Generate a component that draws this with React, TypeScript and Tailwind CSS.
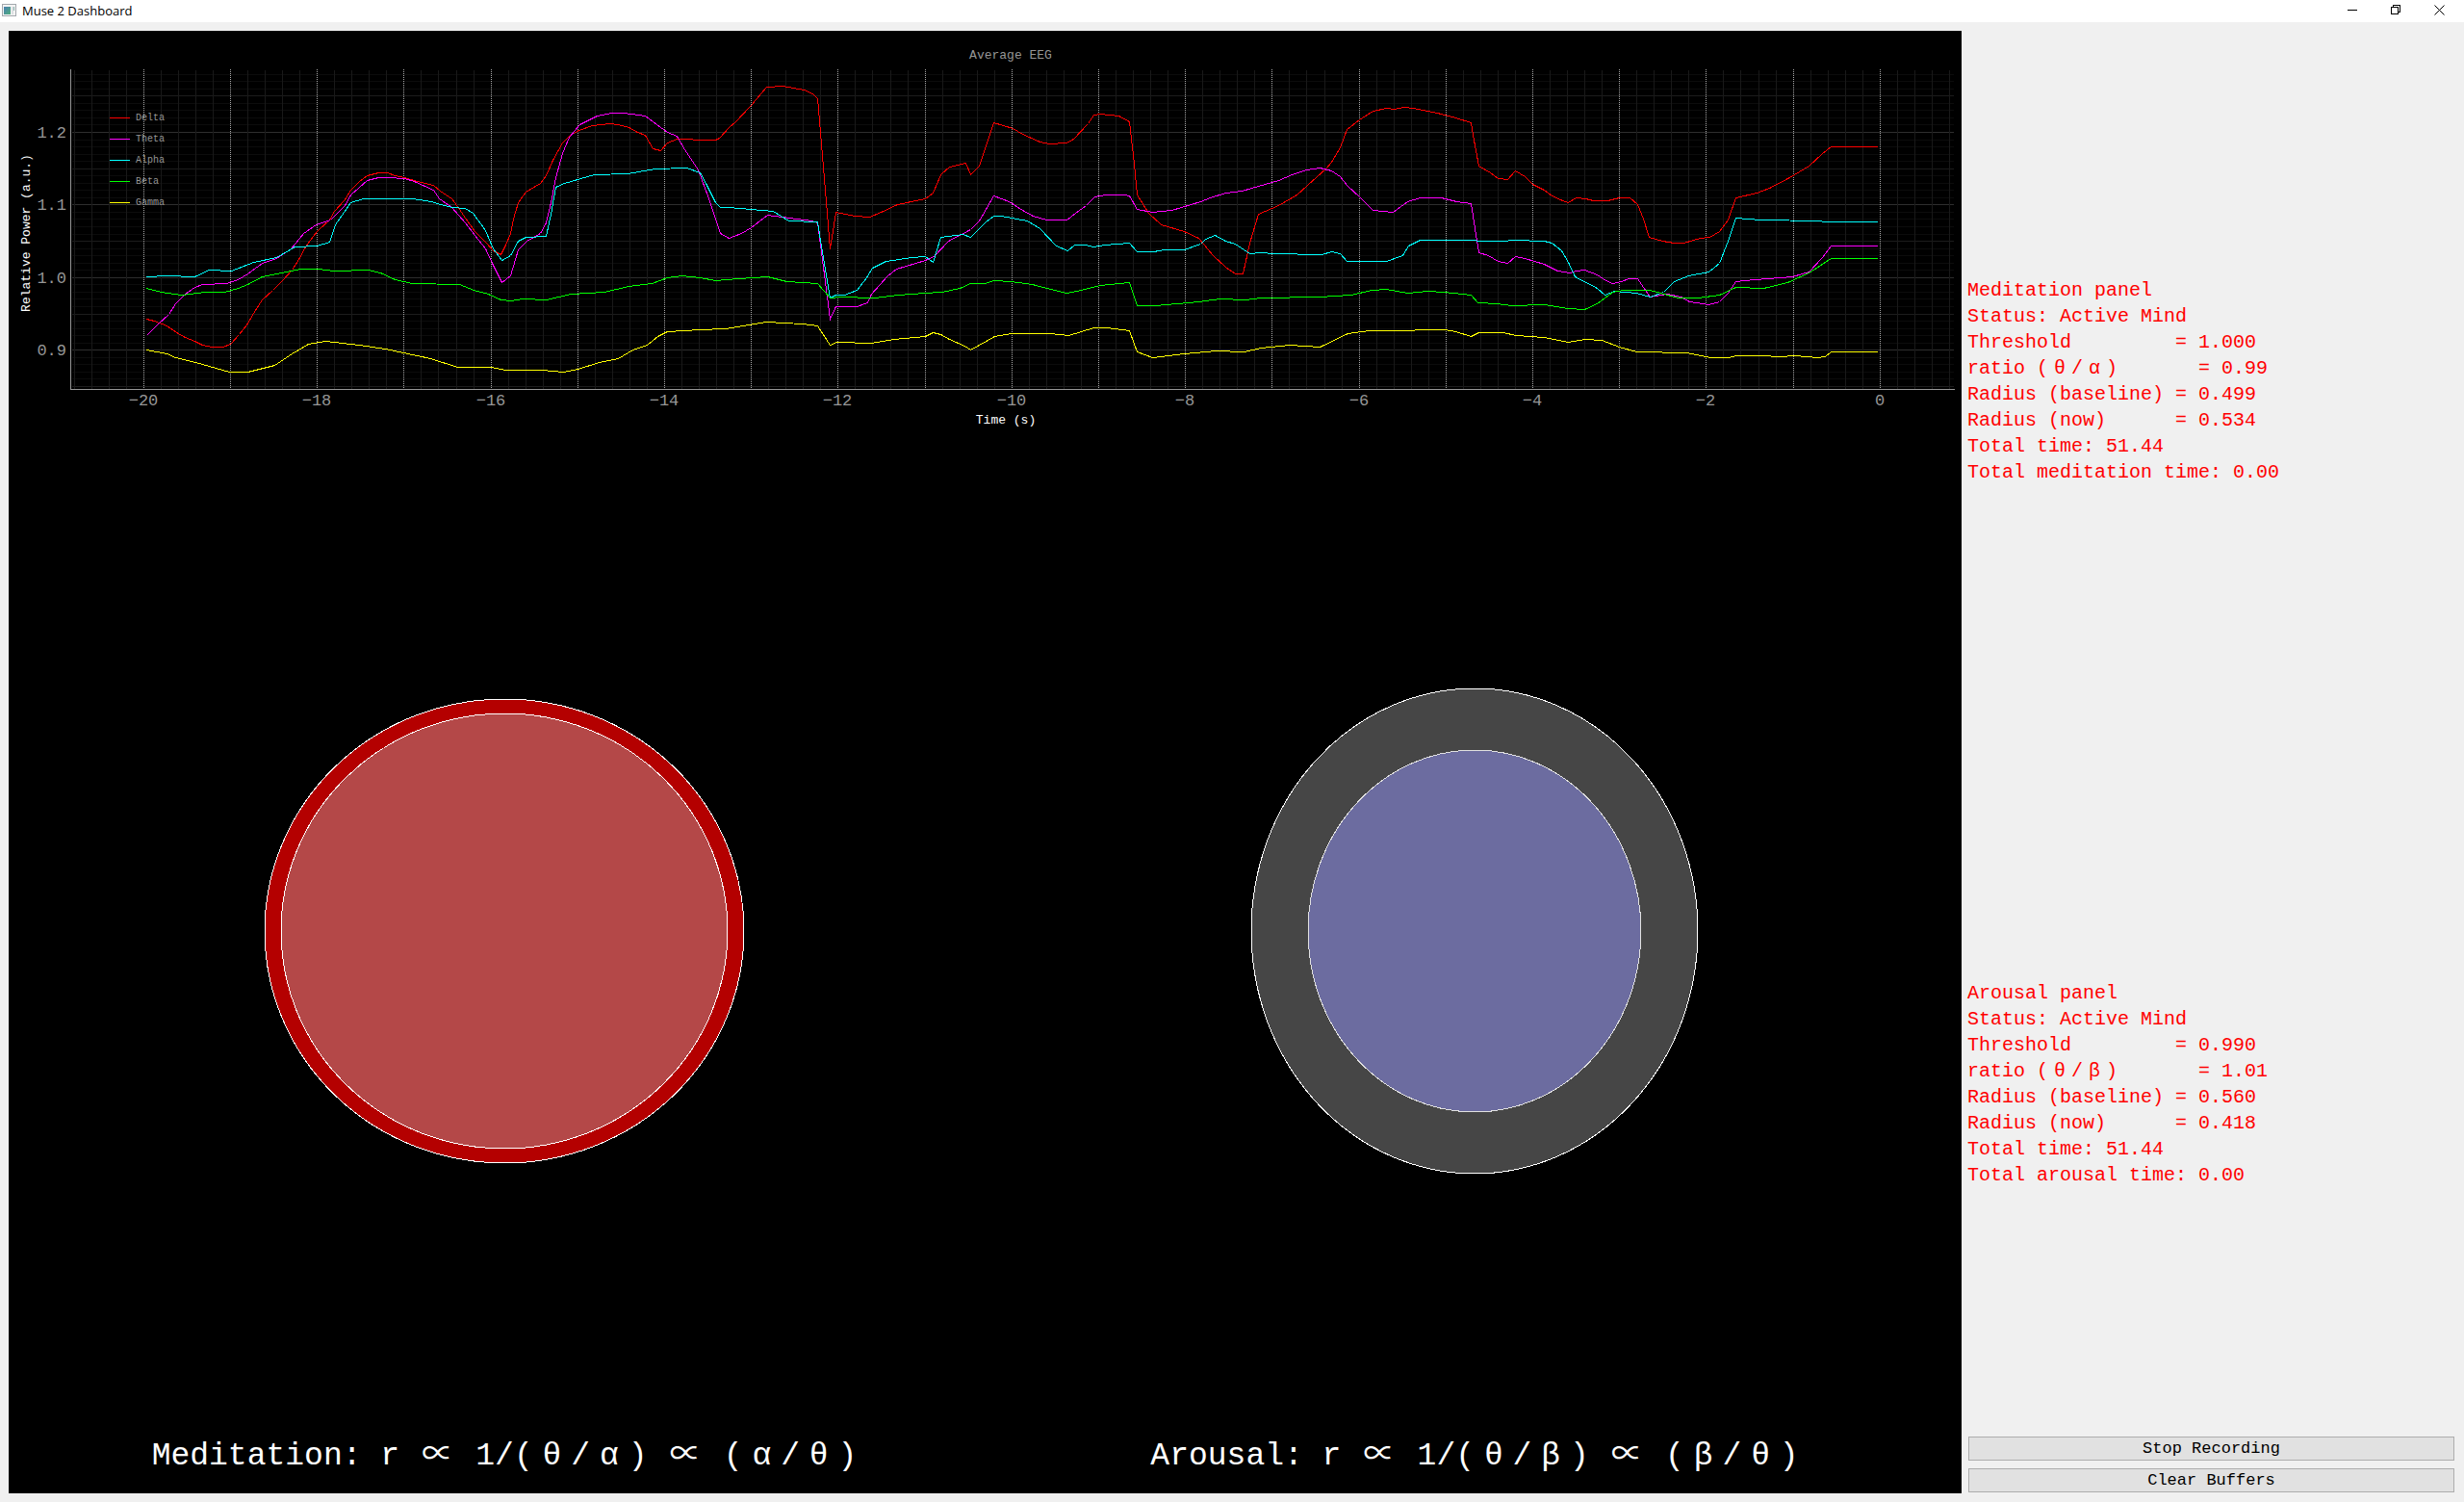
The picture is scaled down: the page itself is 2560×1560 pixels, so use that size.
import React from "react";

type Series = { name: string; color: string; points: string };

const MONO = "font-['Liberation_Mono',monospace]";

const SERIES: Series[] = [
  {
    name: "Delta",
    color: "#ff0000",
    points:
      "152,331 160,333 173,338 183,345 192,350 202,354 210,358 220,360 231,360 239,357 248,347 256,337 263,325 272,311 283,301 293,291 303,280 310,269 317,256 325,245 330,239 342,228 347,219 358,207 364,197 373,188 381,182 393,179 402,179 410,182 420,184 433,188 450,192 457,198 469,206 477,217 483,226 493,240 505,252 512,260 520,264 525,254 530,242 533,227 538,210 546,199 561,190 567,182 574,166 584,148 592,140 601,135 615,130 633,128 642,129 653,132 662,137 670,140 678,154 686,156 693,148 703,144 711,144 728,145 743,145 747,143 757,132 763,127 780,109 796,90 813,89 835,93 844,97 849,102 850,113 862,258 865,240 868,220 878,222 888,224 903,225 915,220 932,212 961,206 969,200 977,181 986,173 1003,169 1008,181 1017,172 1024,151 1032,127 1052,133 1062,139 1080,147 1090,149 1108,148 1115,144 1130,128 1136,119 1143,118 1162,120 1173,126 1178,170 1181,202 1193,221 1206,233 1230,240 1245,247 1260,265 1273,277 1283,284 1291,284 1298,252 1307,222 1328,213 1347,202 1358,192 1377,175 1383,168 1392,153 1399,134 1412,124 1426,115 1440,112 1448,113 1458,111 1468,112 1493,117 1512,122 1528,127 1530,140 1536,172 1548,179 1556,185 1566,186 1574,177 1584,183 1592,191 1604,197 1612,203 1623,208 1629,210 1637,205 1647,206 1655,208 1670,208 1682,205 1693,205 1701,212 1707,227 1713,246 1727,250 1739,252 1749,252 1766,247 1776,246 1786,240 1795,228 1803,205 1825,200 1838,195 1859,184 1879,172 1893,159 1902,152 1950,152",
  },
  {
    name: "Theta",
    color: "#ff00ff",
    points:
      "152,348 163,337 175,326 182,315 192,305 202,298 210,295 235,294 247,290 257,284 272,273 287,268 302,258 315,242 328,233 343,228 358,213 364,202 381,187 393,184 403,184 420,185 430,188 450,197 456,206 469,215 483,231 493,244 504,258 512,275 521,293 530,286 538,259 547,250 561,242 567,231 572,210 577,184 584,159 591,142 602,129 620,120 635,117 648,117 670,120 682,129 693,137 703,141 711,155 725,176 735,203 748,242 757,247 770,242 780,236 797,223 820,226 843,229 849,231 855,277 862,331 868,318 890,318 901,314 905,305 922,286 931,279 961,270 970,266 985,250 1008,238 1017,229 1024,217 1032,203 1048,209 1062,218 1073,224 1087,228 1108,228 1117,221 1128,213 1137,204 1148,202 1167,202 1173,203 1181,217 1197,220 1217,218 1247,209 1257,205 1273,200 1290,198 1307,193 1328,187 1342,181 1357,176 1371,174 1383,177 1392,183 1399,192 1413,205 1426,218 1447,220 1462,209 1475,205 1497,205 1513,209 1528,211 1532,237 1536,262 1546,265 1556,271 1566,273 1574,266 1584,268 1604,274 1618,281 1631,283 1637,281 1646,280 1659,285 1668,291 1675,294 1684,292 1692,289 1701,289 1707,298 1714,308 1732,305 1746,308 1755,313 1775,316 1786,313 1795,304 1803,292 1823,290 1862,287 1879,282 1893,267 1902,255 1950,255",
  },
  {
    name: "Alpha",
    color: "#00ffff",
    points:
      "152,287 173,286 202,287 217,280 240,281 263,272 287,267 306,256 329,255 342,251 348,233 364,210 377,206 428,206 448,209 457,212 470,215 483,216 491,221 504,239 512,258 521,270 530,265 538,250 546,246 567,245 572,222 577,194 586,190 617,181 652,180 680,175 713,174 727,179 734,192 743,210 748,215 757,215 780,217 803,219 819,229 849,230 851,243 862,309 868,306 877,306 890,301 900,288 906,278 920,271 947,267 961,266 969,272 977,246 1000,243 1008,246 1024,230 1032,224 1040,224 1067,229 1080,237 1097,255 1109,260 1116,254 1127,254 1136,256 1147,254 1173,252 1181,261 1198,261 1210,259 1230,259 1247,253 1252,248 1262,244 1273,250 1283,253 1298,263 1310,262 1322,263 1373,264 1383,261 1392,263 1399,271 1440,271 1457,265 1463,255 1475,249 1529,249 1538,250 1561,250 1573,249 1604,250 1612,252 1622,260 1629,272 1636,287 1659,299 1667,306 1677,302 1700,304 1714,308 1728,303 1739,292 1754,286 1775,282 1786,273 1795,250 1803,226 1829,228 1888,229 1896,230 1950,230",
  },
  {
    name: "Beta",
    color: "#00ff00",
    points:
      "152,299 167,303 188,306 213,303 233,303 247,299 257,295 272,287 287,284 312,279 330,279 347,281 382,280 395,283 410,290 428,294 477,295 492,301 507,305 520,311 530,312 543,310 567,311 593,305 627,303 653,297 677,294 693,288 708,286 727,288 743,291 767,289 797,287 817,292 849,294 862,309 873,308 908,309 933,306 960,304 978,303 997,299 1008,294 1023,294 1032,291 1050,292 1072,295 1095,301 1108,304 1123,301 1142,296 1173,293 1181,317 1200,317 1245,313 1267,310 1293,311 1310,309 1370,308 1403,306 1425,301 1440,300 1462,304 1483,302 1500,303 1528,306 1535,314 1555,315 1570,317 1604,316 1629,320 1646,321 1659,315 1675,303 1686,301 1714,301 1743,309 1764,309 1786,306 1803,298 1832,299 1857,293 1879,283 1902,268 1950,268",
  },
  {
    name: "Gamma",
    color: "#ffff00",
    points:
      "152,363 173,367 182,371 203,376 238,386 257,386 285,379 303,367 320,357 338,354 373,358 400,362 447,372 475,381 510,381 525,384 563,384 585,386 600,383 622,376 642,372 657,363 672,358 683,349 693,344 727,342 753,341 772,338 796,334 833,336 849,338 862,358 869,355 905,356 928,352 961,349 969,345 977,347 986,352 1002,359 1008,363 1017,358 1033,349 1050,346 1090,346 1110,348 1136,340 1150,340 1173,343 1181,365 1197,371 1230,367 1263,364 1292,365 1310,361 1340,358 1371,360 1400,346 1422,343 1457,343 1483,342 1500,342 1512,344 1528,349 1536,345 1561,345 1575,348 1604,350 1629,355 1646,352 1664,353 1682,360 1700,365 1752,366 1777,371 1795,371 1804,369 1829,369 1850,370 1864,369 1888,371 1896,370 1902,365 1950,365",
  },
];

const PLOT = { left: 74, right: 2030, top: 72, bottom: 404 };
const timeX = (t: number) => Math.round(148.8 + (t + 20) * 90.2);
const powerY = (hundredths: number) => Math.round(287.8 - (hundredths - 100) * 7.54);

const minorTimes = Array.from({ length: 109 }, (_, i) => i - 104).filter((i) => i % 5 !== 0);
const majorTimes = Array.from({ length: 21 }, (_, i) => i - 20);
const powers = Array.from({ length: 44 }, (_, i) => i + 85);

function powerLineColor(p: number) {
  if (p % 10 === 0) return "#2e2e2e";
  if (p % 5 === 0) return "#1c1c1c";
  return "#0c0c0c";
}

function EegPlot() {
  return (
    <svg viewBox="9 32 2029 428" className={`block w-full ${MONO}`} role="img" aria-label="Average EEG">
      <g shapeRendering="crispEdges" transform="translate(0.5 0.5)" fill="none" strokeWidth="1">
        {powers.map((p) => (
          <line key={p} x1={PLOT.left} x2={PLOT.right - 1} y1={powerY(p)} y2={powerY(p)} stroke={powerLineColor(p)} />
        ))}
        {minorTimes.map((i) => (
          <line key={i} x1={timeX(i / 5)} x2={timeX(i / 5)} y1={PLOT.top} y2={PLOT.bottom} stroke="#191919" />
        ))}
        {majorTimes.map((t) => (
          <line
            key={t}
            x1={timeX(t)}
            x2={timeX(t)}
            y1={PLOT.top - 0.5}
            y2={PLOT.bottom - 0.5}
            stroke="#a8a8a8"
            strokeDasharray="1 1"
          />
        ))}
        <path d="M73 71V404H2030" stroke="#969696" />
        {SERIES.map((s) => (
          <polyline key={s.name} points={s.points} stroke={s.color} />
        ))}
        {SERIES.map((s, i) => (
          <line key={s.name} x1="113" x2="134" y1={122 + i * 22} y2={122 + i * 22} stroke={s.color} />
        ))}
      </g>
      <g fill="#969696" fontSize="10">
        {SERIES.map((s, i) => (
          <text key={s.name} x="141" y={125 + i * 22}>
            {s.name}
          </text>
        ))}
      </g>
      <g fill="#969696" fontSize="17">
        {["1.2", "1.1", "1.0", "0.9"].map((label, i) => (
          <text key={label} x="69" y={powerY(120 - i * 10) + 6} textAnchor="end">
            {label}
          </text>
        ))}
        {majorTimes
          .filter((t) => t % 2 === 0)
          .map((t) => (
            <text key={t} x={timeX(t)} y="421" textAnchor="middle">
              {t < 0 ? `−${-t}` : "0"}
            </text>
          ))}
      </g>
      <g fontSize="13" textAnchor="middle">
        <text x="1050" y="61" fill="#969696">
          Average EEG
        </text>
        <text x="1045" y="440" fill="#ffffff">
          Time (s)
        </text>
        <text transform="translate(31 242) rotate(-90)" fill="#ffffff">
          Relative Power (a.u.)
        </text>
      </g>
    </svg>
  );
}

type Ring = { rx: number; ry: number; fill: string; stroke: string };

function Rings({ label, rings }: { label: string; rings: Ring[] }) {
  return (
    <svg viewBox="0 0 1008 1014" className="block w-full" role="img" aria-label={label}>
      {rings.map((r) => (
        <ellipse key={r.rx} cx="504" cy="507" rx={r.rx} ry={r.ry} fill={r.fill} stroke={r.stroke} shapeRendering="crispEdges" />
      ))}
    </svg>
  );
}

const WIDE = /([θαβ∝])/;

/* Greek letters and the proportional sign take two text cells. */
function CellText({ children }: { children: string }) {
  return (
    <>
      {children.split(WIDE).map((part, i) =>
        WIDE.test(part) ? (
          <span
            key={i}
            className={
              part === "∝"
                ? "inline-block w-[1.2em] text-center leading-none font-['Noto_Sans_CJK_SC',sans-serif]"
                : "inline-block w-[1.2em] text-center leading-none"
            }
          >
            {part}
          </span>
        ) : (
          part
        ),
      )}
    </>
  );
}

function Caption({ children }: { children: string }) {
  return (
    <p className={`text-center text-[33px] leading-[77px] whitespace-pre text-white ${MONO}`}>
      <CellText>{children}</CellText>
    </p>
  );
}

function StatusPanel({ lines }: { lines: string[] }) {
  return (
    <section
      className={`flex flex-1 flex-col justify-center pb-0.5 text-xl leading-[27px] whitespace-pre text-[#ff0000] ${MONO}`}
    >
      {lines.map((line) => (
        <p key={line}>
          <CellText>{line}</CellText>
        </p>
      ))}
    </section>
  );
}

function PushButton({ children }: { children: string }) {
  return (
    <button
      type="button"
      className={`flex h-[25px] items-center justify-center border border-[#adadad] bg-[#e1e1e1] text-[17px] leading-[23px] text-black ${MONO}`}
    >
      {children}
    </button>
  );
}

function WindowButton({ label, children }: { label: string; children: React.ReactNode }) {
  return (
    <button type="button" aria-label={label} className="flex w-[45px] items-center justify-center">
      <svg width="11" height="11" viewBox="0 0 11 11" fill="none" stroke="#000000" className="mb-[2px]">
        {children}
      </svg>
    </button>
  );
}

function TitleBar() {
  return (
    <header className="flex h-[23px] items-stretch bg-white pr-[3px] pl-[2px]">
      <div className="flex items-center gap-[6px]">
        <svg width="15" height="13" viewBox="0 0 15 13" className="mb-[2px]">
          <defs>
            <linearGradient id="pane" x1="0" y1="0" x2="1" y2="1">
              <stop offset="0" stopColor="#4a7fb0" />
              <stop offset="1" stopColor="#4fae7c" />
            </linearGradient>
          </defs>
          <rect x="0.5" y="0.5" width="14" height="12" fill="#f4f4f4" stroke="#a3a8ad" />
          <rect x="2" y="3" width="7" height="8" fill="url(#pane)" />
          <rect x="10" y="3" width="2" height="8" fill="#dcdfe2" />
          <rect x="12" y="3" width="1" height="4" fill="#8fb6b0" />
        </svg>
        <h1 className="text-[13px] leading-[23px] text-black font-['Open_Sans',sans-serif]">Muse 2 Dashboard</h1>
      </div>
      <div className="ml-auto flex">
        <WindowButton label="Minimize">
          <path d="M0 5.5H10" shapeRendering="crispEdges" />
        </WindowButton>
        <WindowButton label="Restore">
          <path d="M0.5 2.5H7.5V9.5H0.5ZM2.5 2.5V0.5H9.5V7.5H7.5" shapeRendering="crispEdges" />
        </WindowButton>
        <WindowButton label="Close">
          <path d="M0.5 0.5L10.5 10.5M10.5 0.5L0.5 10.5" />
        </WindowButton>
      </div>
    </header>
  );
}

const MEDITATION = [
  "Meditation panel",
  "Status: Active Mind",
  "Threshold         = 1.000",
  "ratio (θ/α)       = 0.99",
  "Radius (baseline) = 0.499",
  "Radius (now)      = 0.534",
  "Total time: 51.44",
  "Total meditation time: 0.00",
];

const AROUSAL = [
  "Arousal panel",
  "Status: Active Mind",
  "Threshold         = 0.990",
  "ratio (θ/β)       = 1.01",
  "Radius (baseline) = 0.560",
  "Radius (now)      = 0.418",
  "Total time: 51.44",
  "Total arousal time: 0.00",
];

export default function App() {
  return (
    <div className="flex min-h-screen flex-col bg-[#f0f0f0]">
      <TitleBar />
      <main className="flex flex-1 gap-[6px] p-[9px] pr-[10px]">
        <div className="min-w-0 flex-1 bg-black">
          <EegPlot />
          <div className="grid grid-cols-2 pr-[2px] pl-[11px]">
            <div>
              <Rings
                label="Meditation radius"
                rings={[
                  { rx: 249, ry: 241, fill: "#b40000", stroke: "#ffffff" },
                  { rx: 232, ry: 226, fill: "#b44848", stroke: "#ffffff" },
                ]}
              />
              <Caption>Meditation: r ∝ 1/(θ/α) ∝ (α/θ)</Caption>
            </div>
            <div>
              <Rings
                label="Arousal radius"
                rings={[
                  { rx: 232, ry: 252, fill: "#464646", stroke: "#ffffff" },
                  { rx: 173, ry: 188, fill: "#6c6ca0", stroke: "#e0e0e0" },
                ]}
              />
              <Caption>Arousal: r ∝ 1/(θ/β) ∝ (β/θ)</Caption>
            </div>
          </div>
        </div>
        <aside className="flex w-[506px] shrink-0 flex-col pb-px">
          <StatusPanel lines={MEDITATION} />
          <StatusPanel lines={AROUSAL} />
          <div className="flex flex-col gap-2 pl-px">
            <PushButton>Stop Recording</PushButton>
            <PushButton>Clear Buffers</PushButton>
          </div>
        </aside>
      </main>
    </div>
  );
}
